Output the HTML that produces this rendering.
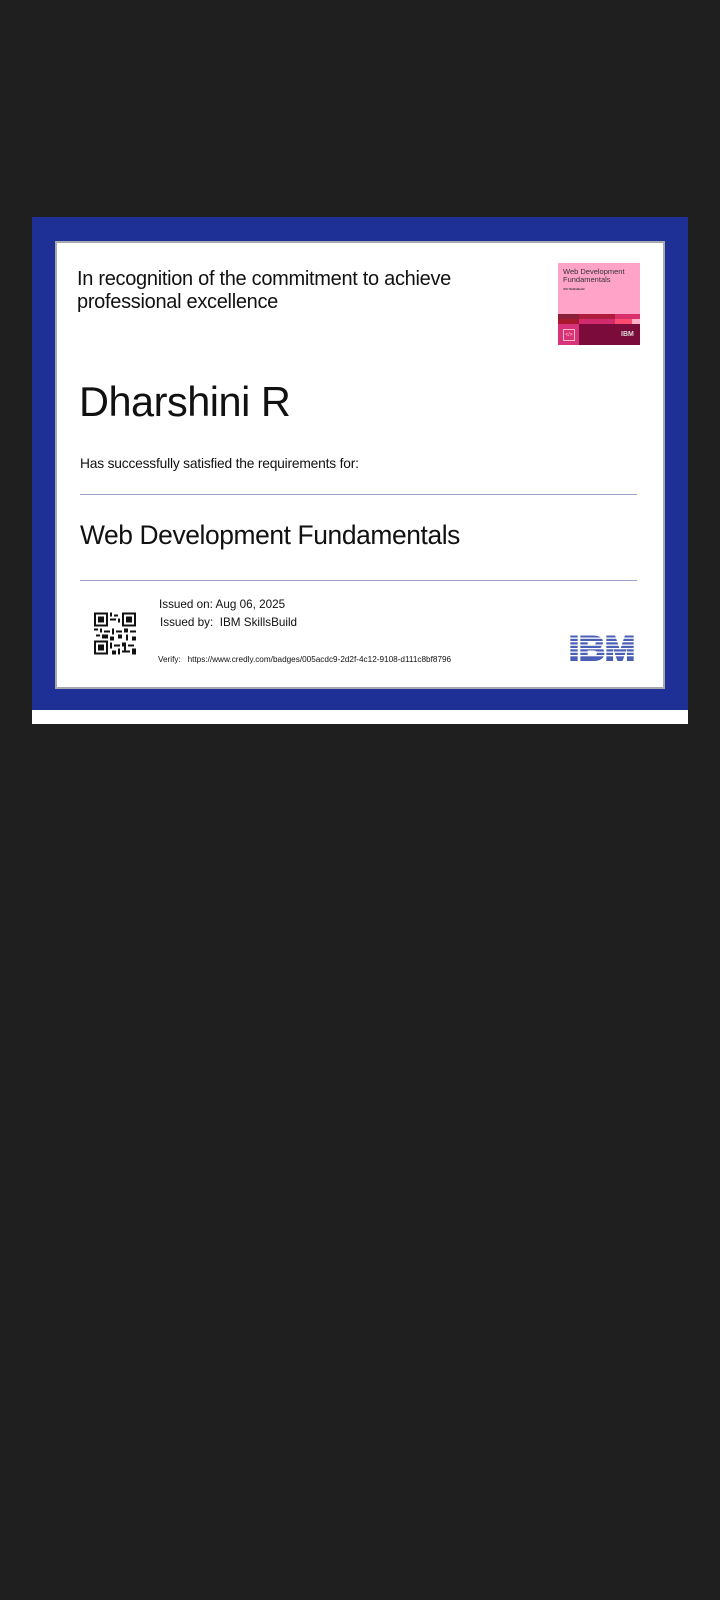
<!DOCTYPE html>
<html><head><meta charset="utf-8"><style>
body{margin:0;width:720px;height:1600px;background:#1f1f1f;position:relative;font-family:"Liberation Sans",sans-serif;overflow:hidden}
.a{position:absolute}
.t{position:absolute;color:#111;white-space:nowrap;line-height:1}
</style></head><body>
<div class="a" style="left:32px;top:217px;width:656px;height:493px;background:#1e3096"></div>
<div class="a" style="left:32px;top:710px;width:656px;height:14px;background:#fff"></div>
<div class="a" style="left:55px;top:241px;width:606px;height:444px;background:#fff;border:2px solid #a8a8b0"></div>
<div class="t" style="left:77px;top:268px;font-size:20px;line-height:23px;letter-spacing:-0.3px">In recognition of the commitment to achieve<br>professional excellence</div>
<div class="t" style="left:79px;top:381px;font-size:41.5px;letter-spacing:-0.5px">Dharshini R</div>
<div class="t" style="left:80px;top:457px;font-size:13.8px;letter-spacing:-0.2px">Has successfully satisfied the requirements for:</div>
<div class="a" style="left:80px;top:494px;width:557px;height:1px;background:#9da3c8"></div>
<div class="t" style="left:80px;top:522px;font-size:26.4px;letter-spacing:-0.4px">Web Development Fundamentals</div>
<div class="a" style="left:80px;top:580px;width:557px;height:1px;background:#9da3c8"></div>
<div class="t" style="left:159px;top:599px;font-size:11.7px">Issued on: Aug 06, 2025</div>
<div class="t" style="left:160px;top:617px;font-size:11.7px">Issued by:&nbsp; IBM SkillsBuild</div>
<div class="t" style="left:158px;top:656px;font-size:8.2px">Verify:&nbsp;&nbsp; https://www.credly.com/badges/005acdc9-2d2f-4c12-9108-d111c8bf8796</div>
<svg class="a" style="left:94px;top:612px" width="42" height="43" viewBox="0 0 21 21" shape-rendering="crispEdges">
<rect width="21" height="21" fill="#fff"/>
<g fill="#111"><rect x="0" y="0" width="7" height="7"/><rect x="14" y="0" width="7" height="7"/><rect x="0" y="14" width="7" height="7"/>
<rect x="8" y="0" width="1" height="2"/><rect x="10" y="1" width="2" height="1"/><rect x="8" y="3" width="3" height="1"/><rect x="12" y="3" width="1" height="2"/><rect x="0" y="8" width="2" height="1"/><rect x="3" y="8" width="1" height="2"/><rect x="5" y="9" width="3" height="1"/><rect x="9" y="8" width="1" height="3"/><rect x="11" y="9" width="3" height="1"/><rect x="15" y="8" width="2" height="2"/><rect x="18" y="9" width="3" height="1"/><rect x="1" y="11" width="2" height="1"/><rect x="4" y="11" width="3" height="2"/><rect x="8" y="12" width="2" height="2"/><rect x="12" y="11" width="2" height="2"/><rect x="16" y="11" width="1" height="3"/><rect x="19" y="12" width="2" height="2"/><rect x="8" y="15" width="1" height="3"/><rect x="10" y="16" width="3" height="1"/><rect x="14" y="15" width="2" height="2"/><rect x="17" y="16" width="3" height="1"/><rect x="9" y="19" width="2" height="2"/><rect x="12" y="18" width="1" height="3"/><rect x="14" y="19" width="4" height="1"/><rect x="19" y="18" width="2" height="3"/><rect x="15" y="17" width="1" height="2"/></g>
<g fill="#fff"><rect x="1" y="1" width="5" height="5"/><rect x="15" y="1" width="5" height="5"/><rect x="1" y="15" width="5" height="5"/></g>
<g fill="#111"><rect x="2" y="2" width="3" height="3"/><rect x="16" y="2" width="3" height="3"/><rect x="2" y="16" width="3" height="3"/></g>
</svg>
<div class="a" style="left:558px;top:263px;width:82px;height:82px;background:#ffa3c8;overflow:hidden">
<div class="t" style="left:5px;top:5px;font-size:7.5px;line-height:8px;color:#333">Web Development<br>Fundamentals</div>
<div class="t" style="left:5px;top:25px;font-size:3px;color:#333">IBM <b>SkillsBuild</b></div>
<div class="a" style="left:0;top:51px;width:82px;height:5px;background:#8a1f3a"></div>
<div class="a" style="left:21px;top:51px;width:36px;height:5px;background:#b01d3c"></div>
<div class="a" style="left:57px;top:51px;width:25px;height:5px;background:#d92e6a"></div>
<div class="a" style="left:0;top:56px;width:21px;height:5px;background:#a8182f"></div>
<div class="a" style="left:21px;top:56px;width:36px;height:5px;background:#d22a6f"></div>
<div class="a" style="left:57px;top:56px;width:17px;height:5px;background:#ff4a6e"></div>
<div class="a" style="left:74px;top:56px;width:8px;height:5px;background:#ffb0c8"></div>
<div class="a" style="left:0;top:61px;width:21px;height:21px;background:#d8337a"></div>
<div class="a" style="left:5px;top:66px;width:10px;height:10px;border:1px solid #fbb;font-size:5px;color:#fcc;text-align:center;line-height:10px">&lt;/&gt;</div>
<div class="a" style="left:21px;top:61px;width:61px;height:21px;background:#7a0b3a"></div>
<div class="t" style="left:63px;top:68px;font-size:7px;color:#ddd;font-weight:bold">IBM</div>
</div>
<svg class="a" style="left:568px;top:634px" width="72" height="28" viewBox="0 0 72 28">
<text x="1" y="26" font-family="Liberation Sans" font-weight="bold" font-size="34" fill="#4a5fb6" stroke="#4a5fb6" stroke-width="2" textLength="66" lengthAdjust="spacingAndGlyphs">IBM</text>
<g fill="#fff"><rect y="3.5" width="72" height="1.3"/><rect y="7" width="72" height="1.3"/><rect y="10.5" width="72" height="1.3"/><rect y="14" width="72" height="1.3"/><rect y="17.5" width="72" height="1.3"/><rect y="21" width="72" height="1.3"/></g>
</svg>
</body></html>
